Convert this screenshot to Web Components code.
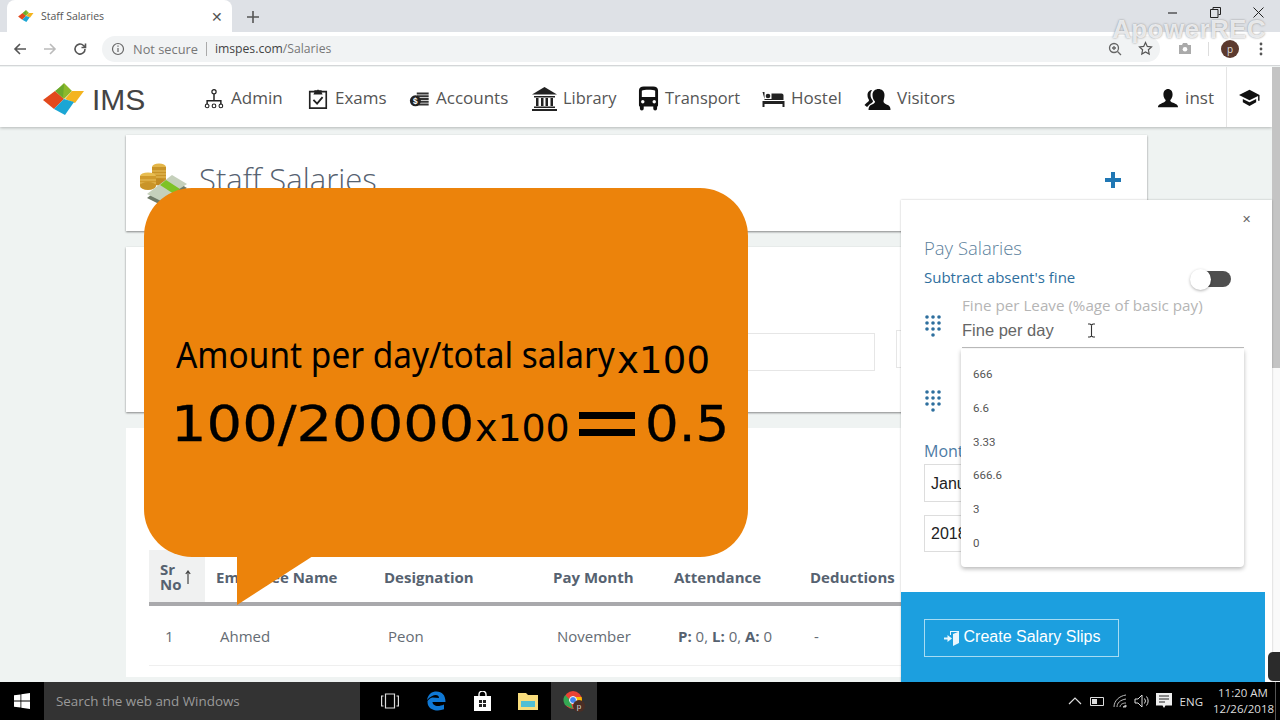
<!DOCTYPE html>
<html>
<head>
<meta charset="utf-8">
<title>Staff Salaries</title>
<style>
html,body{margin:0;padding:0;width:1280px;height:720px;overflow:hidden;font-family:"Open Sans",sans-serif;background:#eff3f2}
#root{display:flex;flex-direction:column;width:1280px;height:720px}
</style>
</head>
<body>
<div id="root">
<browser-chrome title-text="Staff Salaries" url-host="imspes.com" url-path="/Salaries"></browser-chrome>
<ims-page></ims-page>
<win-taskbar></win-taskbar>
</div>
<script>
var logoShapes = '<polygon points="21,0 29,8 21,16 13,8" fill="#8cb82b"/><polygon points="29,8 41,8 32,20 22,16" fill="#f4b41e"/><polygon points="12,8 21,16 11,26 0,17" fill="#e2491d"/><polygon points="21,16 31,19 22,32 11,26" fill="#1ba6d4"/><polygon points="12,8 21,1 20,15" fill="#6aa82c"/>';

class BrowserChrome extends HTMLElement {
	constructor() {
		super();
		var root = this.attachShadow({mode: 'open'});
		root.innerHTML = `
<style>
:host{display:block;font-family:"Open Sans",sans-serif;height:67px;flex:none;position:relative}
.strip{height:32px;background:#dee1e6;display:flex;align-items:flex-end;padding-left:7px}
.tab{width:225px;height:32px;background:#fff;border-radius:8px 8px 0 0;display:flex;align-items:center;box-sizing:border-box;padding:0 9px 0 11px;font-size:10.5px;color:#555}
.tab svg{margin-right:7px}
.tab span{flex:1}
.close{font-size:14px;color:#555}
.new{margin:0 0 8px 14px;width:14px;height:14px;display:block}
.win{margin-left:auto;display:flex;align-self:flex-start;gap:32px;padding:7px 16px 0 0}
.bar{background:#fff;display:flex;align-items:center;border-bottom:1px solid #d4d6d8;height:34px;padding-left:13px;box-sizing:border-box}
.nav{display:flex;gap:16px;align-items:center;width:89px;flex:none}
.omni{width:1058px;flex:none;height:26px;border-radius:13px;background:#f1f3f4;display:flex;align-items:center;box-sizing:border-box;padding:0 7px 0 9px;font-size:12.2px;color:#777}
.omni .ns{font-size:12.8px;margin-left:8px}
.omni .sep{width:1px;height:14px;background:#aaa;margin:0 8px}
.omni b{font-weight:400;color:#444}
.omni .right{margin-left:auto;display:flex;gap:16px;align-items:center}
.tools{display:flex;align-items:center;margin-left:18px}
.avatar{width:18px;height:18px;border-radius:50%;background:#5c3a2e;color:#ddd;font-size:10px;text-align:center;line-height:18px;margin:0 20px 0 0}
.vsep{width:1px;height:14px;background:#ddd;margin:0 12px 0 16px}
.mark{position:absolute;right:14px;top:14px;font:700 26px "Liberation Sans",sans-serif;color:rgba(246,247,249,.85);letter-spacing:.4px;text-shadow:0 0 2px rgba(120,120,120,.85)}
</style>
<div class="strip">
	<div class="tab"><svg viewBox="0 0 42 32" width="16" height="12">${logoShapes}</svg><span></span><div class="close">✕</div></div>
	<svg class="new" viewBox="0 0 14 14"><path d="M7 1v12M1 7h12" stroke="#555" stroke-width="1.6"/></svg>
	<div class="win">
		<svg width="11" height="11" viewBox="0 0 11 11"><path d="M1 6h9" stroke="#222" stroke-width="1.1"/></svg>
		<svg width="11" height="11" viewBox="0 0 11 11" fill="none" stroke="#222"><path d="M3 2.5V.5h7.5v7H8.5M.5 2.5h7.5v8H.5z"/></svg>
		<svg width="11" height="11" viewBox="0 0 11 11"><path d="M.5.5l10 10M10.5.5l-10 10" stroke="#222"/></svg>
	</div>
</div>
<div class="bar">
	<div class="nav">
		<svg width="14" height="14" viewBox="0 0 14 14" fill="none" stroke="#555" stroke-width="1.6"><path d="M13 7H2M7 2L2 7l5 5"/></svg>
		<svg width="14" height="14" viewBox="0 0 14 14" fill="none" stroke="#bbb" stroke-width="1.6"><path d="M1 7h11M7 2l5 5-5 5"/></svg>
		<svg width="14" height="14" viewBox="0 0 14 14" fill="none" stroke="#555" stroke-width="1.6"><path d="M12 7a5 5 0 1 1-1.5-3.5L12.5 5.5M12.5 1.5v4h-4"/></svg>
	</div>
	<div class="omni">
		<svg width="14" height="14" viewBox="0 0 14 14" fill="none" stroke="#666" stroke-width="1.2"><circle cx="7" cy="7" r="5.5"/><path d="M7 6v4M7 3.5v1.3"/></svg>
		<span class="ns">Not secure</span><span class="sep"></span><b class="host"></b><span class="path"></span>
		<div class="right">
			<svg width="14" height="14" viewBox="0 0 14 14" fill="none" stroke="#666" stroke-width="1.3"><circle cx="6" cy="6" r="4.5"/><path d="M9.5 9.5L13 13M4 6h4M6 4v4"/></svg>
			<svg width="15" height="15" viewBox="0 0 15 15" fill="none" stroke="#555" stroke-width="1.2"><path d="M7.5 1.5l1.8 3.9 4.2.5-3.1 2.9.8 4.2-3.7-2.1-3.7 2.1.8-4.2L1.5 5.9l4.2-.5z"/></svg>
		</div>
	</div>
	<div class="tools">
		<svg width="14" height="13" viewBox="0 0 14 13"><path d="M1 3h3l1-2h4l1 2h3v9H1z" fill="#aaa"/><circle cx="7" cy="7.2" r="2.3" fill="#fff"/></svg>
		<span class="vsep"></span>
		<div class="avatar">p</div>
		<svg width="4" height="14" viewBox="0 0 4 14" fill="#555"><circle cx="2" cy="2" r="1.4"/><circle cx="2" cy="7" r="1.4"/><circle cx="2" cy="12" r="1.4"/></svg>
	</div>
</div>
<div class="mark">ApowerREC</div>`;
		root.querySelector('.tab span').textContent = this.getAttribute('title-text');
		root.querySelector('.host').textContent = this.getAttribute('url-host');
		root.querySelector('.path').textContent = this.getAttribute('url-path');
	}
}
customElements.define('browser-chrome', BrowserChrome);

const NAV_ICONS = {
	admin: '<circle cx="11" cy="4" r="2.3" fill="none" stroke="#222" stroke-width="1.3"/><path d="M11 6.5V14M3.5 18v-4h15v4" fill="none" stroke="#222" stroke-width="1.6"/><circle cx="3.5" cy="19.5" r="2" fill="none" stroke="#222" stroke-width="1.2"/><circle cx="11" cy="19.5" r="2" fill="none" stroke="#222" stroke-width="1.2"/><circle cx="18.5" cy="19.5" r="2" fill="none" stroke="#222" stroke-width="1.2"/>',
	exams: '<path d="M2 4h18v18H2z" fill="none" stroke="#222" stroke-width="1.8"/><path d="M7 5V2.5h3a1.2 1.2 0 0 1 2 0h3V5l1 2H6z" fill="#222"/><path d="M6 13l4 4 6-7" fill="none" stroke="#222" stroke-width="2"/>',
	accounts: '<path d="M8 5h13v2H8zM8 8h13v2H8zM8 11h13v2H8zM8 14h13v2H8zM8 17h13v2H8z" fill="#333"/><circle cx="6.5" cy="14" r="6" fill="#222"/><text x="6.5" y="17.5" font-size="9" font-weight="700" text-anchor="middle" fill="#fff" font-family="Liberation Sans">$</text>',
	library: '<path d="M12.5 1L25 8.5H0z" fill="#222"/><path d="M2 10h21v1.5H2zM4 12h2.5v8H4zM9 12h2.5v8H9zM13.5 12H16v8h-2.5zM18.5 12H21v8h-2.5zM2 20.5h21V22H2zM0 23h25v2H0z" fill="#222"/>',
	transport: '<path d="M6 0h10c3 0 5 1.5 5 4v15c0 1.5-.5 2-1 2v2a1.5 1.5 0 0 1-4 0v-2H6v2a1.5 1.5 0 0 1-4 0v-2c-.5 0-1-.5-1-2V4c0-2.5 2-4 5-4z" fill="#111"/><path d="M4 4.5c2-1.5 12-1.5 14 0V11H4z" fill="#fff"/><circle cx="5" cy="16" r="1.8" fill="#fff"/><circle cx="17" cy="16" r="1.8" fill="#fff"/>',
	hostel: '<path d="M0 2h2v8h19V5.5c0-1-.5-2-2-2H9V9H2zM0 11h22v6h-2v-3H2v3H0z" fill="#222"/><circle cx="5.5" cy="6" r="2.3" fill="#222"/>',
	visitors: '<path d="M14 2c-3 0-6 2-6 6 0 3 1 5 2.5 6.5 0 1-.5 2-3 3C5 18.5 4 20 4 23h22c0-3-1-4.5-4-5.5-2-.7-3-2-3-3.2C19 13 20 11 20 8c0-4-3-6-6-6z" fill="#111"/><path d="M8 3C5 3 3 5 3 8c0 2 .5 3.5 1.5 5C4.5 15 2 15.5 0 18l2.5 2 3-3c2-1 3-2 3-3-1-1.5-2.5-3-2.5-6 0-2 .5-3.5 1.5-5z" fill="#111"/>',
	user: '<path d="M11 1c-3 0-5 2.500-5 6 0 2.500 1 4.500 2.500 6 0 1.500-1 2-3 3S0 18 0 21h22c0-3-3-4-5.500-5s-3-1.500-3-3C15 11.500 16 9.500 16 7c0-3.500-2-6-5-6z" fill="#111"/>',
	cap: '<path d="M11 1L0 6.500 11 12l9-4.500v5h1.500V6.500zM4 10.500v3.500l7 4 7-4v-3.500L11 14z" fill="#111"/>'
};

class NavItem extends HTMLElement {
	constructor() {
		super();
		var root = this.attachShadow({mode: 'open'});
		var icon = this.getAttribute('icon');
		var w = this.getAttribute('iw') || 22, h = this.getAttribute('ih') || 22;
		var vb = this.getAttribute('vb') || '0 0 22 24';
		root.innerHTML = `
<style>
:host{display:flex;align-items:center;gap:6px;font-size:17px;color:#555;font-family:"Open Sans",sans-serif}
svg{display:block;flex:none;margin-top:3px}
</style>
<svg width="${w}" height="${h}" viewBox="${vb}">${NAV_ICONS[icon]}</svg><slot></slot>`;
	}
}
customElements.define('nav-item', NavItem);

class PayPanel extends HTMLElement {
	constructor() {
		super();
		var root = this.attachShadow({mode: 'open'});
		var dots = '<svg width="16" height="22" viewBox="0 0 16 22" fill="#2e6f9e"><circle cx="2" cy="2" r="1.8"/><circle cx="8" cy="2" r="1.8"/><circle cx="14" cy="2" r="1.8"/><circle cx="2" cy="8" r="1.8"/><circle cx="8" cy="8" r="1.8"/><circle cx="14" cy="8" r="1.8"/><circle cx="2" cy="14" r="1.8"/><circle cx="8" cy="14" r="1.8"/><circle cx="14" cy="14" r="1.8"/><circle cx="8" cy="20" r="1.8"/></svg>';
		root.innerHTML = `
<style>
:host{display:flex;flex-direction:column;font-family:"Open Sans",sans-serif;position:absolute;left:901px;top:133px;width:371px;height:482px;background:#fff;box-shadow:0 0 2px rgba(0,0,0,.25)}
.body{flex:1;padding:0 0 0 23px;position:relative;min-height:0}
.x{position:absolute;right:21px;top:12px;font-size:11px;color:#666;line-height:14px}
h2{font-weight:300;font-size:18.5px;margin:0;padding-top:35px;line-height:25px;color:#5c7f9c}
.sw{display:flex;align-items:center;width:307px;justify-content:space-between;margin-top:6px;font-size:15px;color:#2e6f9e;height:22px;white-space:nowrap}
.toggle{width:36px;height:16px;border-radius:8px;background:#4f4f4f;position:relative;margin-top:3px}
.toggle::before{content:"";position:absolute;left:-5px;top:-2px;width:21px;height:21px;border-radius:50%;background:#fff;box-shadow:0 1px 3px rgba(0,0,0,.3)}
.field{display:flex;margin-top:7px;gap:21px;padding-left:1px}
.field>svg{margin-top:20px}
.inp{width:282px;height:53px;border-bottom:1px solid #bbb;box-sizing:border-box}
.cap{font-size:15.2px;color:#b5b5b5;line-height:21px;white-space:nowrap}
.val{font:16.5px "Liberation Sans",sans-serif;color:#666;line-height:28px;display:flex;align-items:center}
.gap2{height:42px;display:flex;align-items:center;margin-top:32px;padding-left:1px}
.mon{font-size:16px;color:#4d7ba5;margin-top:18px;line-height:22px}
.sel{width:37px;height:38px;border:1px solid #ddd;border-right:0;box-sizing:border-box;font:16px "Liberation Sans",sans-serif;color:#222;padding:0 0 0 6px;line-height:38px;margin-top:2px;white-space:nowrap}
.sel + .sel{margin-top:13px;height:37px;line-height:35px}
.foot{height:90px;background:#1c9fdf;padding:27px 0 0 23px;box-sizing:border-box;width:364px;flex:none}
.btn{display:flex;align-items:center;gap:4px;box-sizing:border-box;width:195px;height:38px;border:1px solid #a7dcf3;color:#fff;font:16px "Liberation Sans",sans-serif;justify-content:center;padding:0 0 2px 1px}
.drop{position:absolute;left:60px;top:149px;width:283px;height:218px;background:#fff;border-radius:0 0 4px 4px;box-shadow:0 2px 4px rgba(0,0,0,.28);font:11.5px "Roboto",sans-serif;color:#555;padding:9px 0 0 12px;box-sizing:border-box}
.drop div{height:33.8px;line-height:33.8px}
</style>
<div class="body">
	<div class="x">✕</div>
	<h2>Pay Salaries</h2>
	<div class="sw"><span>Subtract absent's fine</span><span class="toggle"></span></div>
	<div class="field">${dots}<div class="inp"><div class="cap">Fine per Leave (%age of basic pay)</div><div class="val">Fine per day<svg width="9" height="15" viewBox="0 0 9 15" fill="none" stroke="#333" stroke-width="1.1" style="margin-left:33px"><path d="M1 1h2l1.5 1L6 1h2M4.5 2v11M1 14h2l1.5-1L6 14h2"/></svg></div></div></div>
	<div class="gap2">${dots}</div>
	<div class="mon">Mont</div>
	<div class="sel">Janu</div>
	<div class="sel">2018</div>
	<div class="drop"><div>666</div><div>6.6</div><div>3.33</div><div>666.6</div><div>3</div><div>0</div></div>
</div>
<div class="foot"><span class="btn"><svg width="16" height="15" viewBox="0 0 16 15" fill="#e8f6fd" style="margin-top:2px"><path d="M6 0h9v12l-6 3V3l5-2H7v3H6zM0 6.5h3.5V4L8 7.5 3.5 11V8.5H0z"/></svg>Create Salary Slips</span></div>`;
	}
}
customElements.define('pay-panel', PayPanel);

class SpeechBubble extends HTMLElement {
	constructor() {
		super();
		var root = this.attachShadow({mode: 'open'});
		root.innerHTML = `
<style>
:host{position:absolute;left:144px;top:121px;width:604px;height:369px;background:#ec830b;border-radius:48px;display:flex;flex-direction:column;color:#000;box-sizing:border-box;padding:142px 0 0 28px;font-family:"DejaVu Sans",sans-serif}
.tail{position:absolute;left:93px;top:368px;width:76px;height:49px;background:#ec830b;clip-path:polygon(0 0,100% 0,0 100%)}
.l1,.l2{display:flex;align-items:baseline;white-space:nowrap}
.l1{line-height:50px;height:50px;margin-left:4px}
.words{display:inline-block;width:441px;flex:none;font:36px "Noto Sans",sans-serif;transform:scaleX(.928);transform-origin:0 50%}
.times{font-size:37px;transform:translateY(5px);letter-spacing:.2px}
.l2{line-height:56px;height:56px;margin-top:16px;font-size:50px;margin-left:-1px;-webkit-text-stroke:.3px #000}
.wide{display:inline-block;flex:none;transform:scaleX(1.118);transform-origin:0 50%}
.calc{width:304px}
.by{font-size:38px;width:104px;flex:none;letter-spacing:-.1px;-webkit-text-stroke:0}
.eq{display:block;flex:none;width:56px;height:24px;border-top:7px solid #000;border-bottom:7px solid #000;box-sizing:border-box;margin:0 10px 0 0;align-self:center}
.res{width:82px;transform:scaleX(1.06)}
</style>
<div class="l1"><span class="words">Amount per day/total salary</span><span class="times">x100</span></div>
<div class="l2"><span class="wide calc">100/20000</span><span class="by">x100</span><i class="eq"></i><span class="wide res">0.5</span></div>
<div class="tail"></div>`;
	}
}
customElements.define('speech-bubble', SpeechBubble);

class ImsPage extends HTMLElement {
	constructor() {
		super();
		var root = this.attachShadow({mode: 'open'});
		root.innerHTML = `
<style>
:host{display:block;flex:1;min-height:0;position:relative;overflow:hidden;background:#eff3f2;font-family:"Open Sans",sans-serif}
.top{height:60px;width:1272px;background:#fff;display:flex;align-items:center;box-shadow:0 1px 3px rgba(0,0,0,.25);box-sizing:border-box;padding-left:43px;position:relative}
.brand{display:flex;align-items:center;gap:7px;width:160px;flex:none;font:400 30px "Liberation Sans",sans-serif;color:#444}
.brand svg{margin-top:3px}
.brand span{padding-top:5px}
.menu{display:grid;grid-template-columns:104px 102px 123px 106px 124px 102px auto}
.tight{font-size:16.4px}
.me{margin-left:auto;display:flex;align-items:center;height:60px}
.me nav-item{margin-right:12px}
.cap{width:46px;height:60px;border-left:1px solid #e4e4e4;display:flex;align-items:center;justify-content:center;box-sizing:border-box}
.content{width:1021px;margin:8px 0 0 126px;display:flex;flex-direction:column;gap:16px}
.card{background:#fff;box-shadow:0 1px 2px rgba(0,0,0,.45)}
.head{height:96px;display:flex;align-items:center;padding:0 25px 0 12px;box-sizing:border-box;position:relative}
.head h1{font-size:31px;font-weight:300;color:#566270;margin:-9px 0 0 11px;font-family:"Open Sans",sans-serif}
.head .plus{margin:-7px 0 0 auto}
.filter{height:165px;padding:86px 0 0 600px;box-sizing:border-box;display:flex;gap:21px}
.filter i{display:block;width:149px;height:38px;border:1px solid #e6e6e6;box-sizing:border-box;flex:none}
.filter i + i{width:120px;margin-top:-3px}
.tablecard{height:249px;padding:122px 0 0 23px;box-sizing:border-box;box-shadow:none}
table{border-collapse:separate;border-spacing:0;width:770px;table-layout:fixed;font-size:15px;color:#656c74}
th{font-size:15px;font-weight:700;color:#566270;text-align:left;height:56px;border-bottom:4px solid #a9a9ac;padding:2px 0 0;box-sizing:border-box;vertical-align:middle;white-space:nowrap}
th.sr{background:#f0f1f1;padding-left:11px}
.srwrap{display:flex;align-items:center;gap:4px;line-height:15px}
td{height:60px;padding:0;border-bottom:1px solid #efefef;font-size:15px;white-space:nowrap;box-sizing:border-box}
td b{color:#566270}
.scroll{position:absolute;right:0;top:0;width:8px;height:615px;background:#fafafa}
.scroll b{display:block;width:8px;height:301px;background:#c4c4c4}
.grip{position:absolute;right:0;top:585px;width:12px;height:29px;border-radius:5px 0 0 5px;background:#2b2b2b}
</style>
<div class="top">
	<div class="brand"><svg viewBox="0 0 42 32" width="42" height="32">${logoShapes}</svg><span>IMS</span></div>
	<div class="menu">
		<nav-item icon="admin">Admin</nav-item>
		<nav-item icon="exams">Exams</nav-item>
		<nav-item icon="accounts" iw="21">Accounts</nav-item>
		<nav-item icon="library" class="tight" iw="25" ih="25" vb="0 0 25 25">Library</nav-item>
		<nav-item icon="transport" class="tight" vb="0 0 22 25" iw="21" ih="25">Transport</nav-item>
		<nav-item icon="hostel" vb="0 0 22 18" ih="18" iw="23">Hostel</nav-item>
		<nav-item icon="visitors" iw="27" ih="24" vb="0 0 26 24">Visitors</nav-item>
	</div>
	<div class="me">
		<nav-item icon="user">inst</nav-item>
		<div class="cap"><svg width="21" height="19" viewBox="0 0 22 18">${NAV_ICONS.cap}</svg></div>
	</div>
</div>
<div class="content">
	<div class="card head">
		<svg width="50" height="44" viewBox="0 0 50 44" style="flex:none;margin-top:-1px">
			<ellipse cx="21" cy="6" rx="7" ry="3.5" fill="#e3b548"/><rect x="14" y="6" width="14" height="15" fill="#c99428"/><path d="M14 10h14M14 13h14M14 16h14" stroke="#e8c05c"/><ellipse cx="21" cy="21" rx="7" ry="3.5" fill="#c18a22"/>
			<ellipse cx="10" cy="15" rx="8" ry="3.5" fill="#e8bd50"/><rect x="2" y="15" width="16" height="10" fill="#d09a2c"/><path d="M2 19h16M2 22h16" stroke="#e8c05c"/><ellipse cx="10" cy="25" rx="8" ry="4" fill="#c99428"/>
			<polygon points="9,37 34,18 49,27 23,44" fill="#6f7a68"/><polygon points="9,33 34,14 49,23 23,40" fill="#c5d0bb"/><polygon points="22,24 28,19 42,28 36,33" fill="#7ec225"/>
		</svg>
		<h1>Staff Salaries</h1>
		<svg class="plus" width="18" height="18" viewBox="0 0 18 18"><path d="M9 1v16M1 9h16" stroke="#2077b4" stroke-width="4"/></svg>
	</div>
	<div class="card filter"><i></i><i></i></div>
	<div class="card tablecard">
		<table>
			<colgroup><col style="width:56px"><col style="width:179px"><col style="width:169px"><col style="width:121px"><col style="width:136px"><col style="width:109px"></colgroup>
			<thead><tr><th class="sr"><div class="srwrap"><span>Sr<br>No</span><svg width="6" height="14" viewBox="0 0 6 14" fill="none" stroke="#444" stroke-width="1.2"><path d="M3 14V1M.8 4L3 1l2.2 3"/></svg></div></th><th style="padding-left:11px">Employee Name</th><th>Designation</th><th>Pay Month</th><th>Attendance</th><th>Deductions</th></tr></thead>
			<tbody><tr><td style="padding-left:16px">1</td><td style="padding-left:15px">Ahmed</td><td style="padding-left:4px">Peon</td><td style="padding-left:4px">November</td><td style="padding-left:4px"><b>P:</b> 0, <b>L:</b> 0, <b>A:</b> 0</td><td style="padding-left:4px">-</td></tr></tbody>
		</table>
	</div>
</div>
<div class="scroll"><b></b></div>
<pay-panel></pay-panel>
<div class="grip"></div>
<speech-bubble></speech-bubble>`;
	}
}
customElements.define('ims-page', ImsPage);

class WinTaskbar extends HTMLElement {
	constructor() {
		super();
		var root = this.attachShadow({mode: 'open'});
		root.innerHTML = `
<style>
:host{display:flex;flex:none;height:38px;background:#000;align-items:center;font-family:"Open Sans",sans-serif;color:#ddd;position:relative}
.start{width:44px;display:flex;justify-content:center}
.search{width:316px;height:38px;background:#333;color:#9a9a9a;font-size:13.4px;line-height:38px;padding-left:12px;box-sizing:border-box}
.ic{width:46px;height:38px;display:flex;align-items:center;justify-content:center;flex:none}
.active{background:#333}
.tray{margin-left:auto;display:flex;align-items:center;height:38px;font-size:11.5px;color:#ddd}
.tray svg{display:block}
.clock{text-align:center;line-height:16px;font-size:11.5px;width:60px;margin-right:2px}
.desk{width:1px;height:38px;background:#555;margin-right:4px}
</style>
<div class="start"><svg width="16" height="16" viewBox="0 0 16 16" fill="#fff"><path d="M0 2.300l6.500-.9v6.200H0zM7.300 1.300L16 0v7.600H7.300zM0 8.400h6.500v6.200L0 13.700zM7.300 8.400H16V16l-8.700-1.300z"/></svg></div>
<div class="search">Search the web and Windows</div>
<div class="ic" style="margin-left:7px"><svg width="18" height="16" viewBox="0 0 18 16" fill="none" stroke="#ddd" stroke-width="1.2"><path d="M4.500 1h9v14h-9zM2.500 3H.6v10h1.900M15.500 3h1.900v10h-1.900"/></svg></div>
<div class="ic"><svg width="20" height="20" viewBox="0 0 20 20"><path d="M1 9C2 3 6 .5 10.500.5 16 .5 19.500 4 19.500 11H6.500c0 3.500 5 5.500 11.500 2.500v4.800C11 21 1 19 1.500 10 3 8 4 7 6.500 6.500L13 7c0-4-6-4.500-12 2z" fill="#0f78d4"/></svg></div>
<div class="ic"><svg width="17" height="20" viewBox="0 0 17 20"><path d="M0 5h17v15H0z" fill="#fff"/><path d="M5 6V3.500a3.500 3.500 0 0 1 7 0V6" fill="none" stroke="#fff" stroke-width="1.4"/><path d="M5 9h3v3H5zM9 9h3v3H9zM5 13h3v3H5zM9 13h3v3H9z" fill="#222"/></svg></div>
<div class="ic"><svg width="20" height="17" viewBox="0 0 20 17"><path d="M0 0h8l2 2h10v15H0z" fill="#f8dc7c"/><path d="M3 8h14v6H3z" fill="#52bfd4"/></svg></div>
<div class="ic active"><svg width="22" height="22" viewBox="0 0 22 22"><circle cx="10" cy="10" r="9" fill="#ea4335"/><path d="M2 15A9 9 0 0 1 2.200 5L7 10l3 9z" fill="#34a853"/><path d="M10 7h8.500A9 9 0 0 1 14 18z" fill="#fbbc05"/><circle cx="10" cy="10" r="3.5" fill="#4285f4" stroke="#fff"/><circle cx="16" cy="16" r="6" fill="#4a2e25"/><text x="16" y="19" font-size="8" text-anchor="middle" fill="#ddd" font-family="Liberation Sans">p</text></svg></div>
<div class="tray">
	<svg width="14" height="8" viewBox="0 0 14 8" fill="none" stroke="#ddd" stroke-width="1.2" style="margin-right:8px"><path d="M1 7l6-6 6 6"/></svg>
	<svg width="15" height="9" viewBox="0 0 15 9" style="margin-right:8px"><path d="M.5.5h13v8H.5z" fill="none" stroke="#ddd"/><path d="M2 2h5v5H2z" fill="#ddd"/></svg>
	<svg width="14" height="14" viewBox="0 0 14 14" fill="none" stroke="#bbb" style="margin-right:7px"><path d="M1 13C1 7 6 2 13 1M4 13c0-4 3-7 9-8M7 13c0-2 2-4 6-4"/><path d="M10 13h3v-2z" fill="#ddd"/></svg>
	<svg width="16" height="14" viewBox="0 0 16 14" fill="none" stroke="#ddd" style="margin-right:6px"><path d="M1 5h3l4-4v12L4 9H1zM10.500 4.500a4 4 0 0 1 0 5M12.500 2.500a7 7 0 0 1 0 9"/></svg>
	<svg width="16" height="16" viewBox="0 0 16 16" style="margin-right:8px"><path d="M0 0h16v12.500H9.500L8 15l-1.500-2.500H0z" fill="#eee"/><path d="M3 3h10M3 6h10M3 9h6" stroke="#222"/></svg>
	<span style="margin-right:10px">ENG</span>
	<div class="clock">11:20 AM<br>12/26/2018</div>
	<div class="desk"></div>
</div>`;
	}
}
customElements.define('win-taskbar', WinTaskbar);
</script>
</body>
</html>
